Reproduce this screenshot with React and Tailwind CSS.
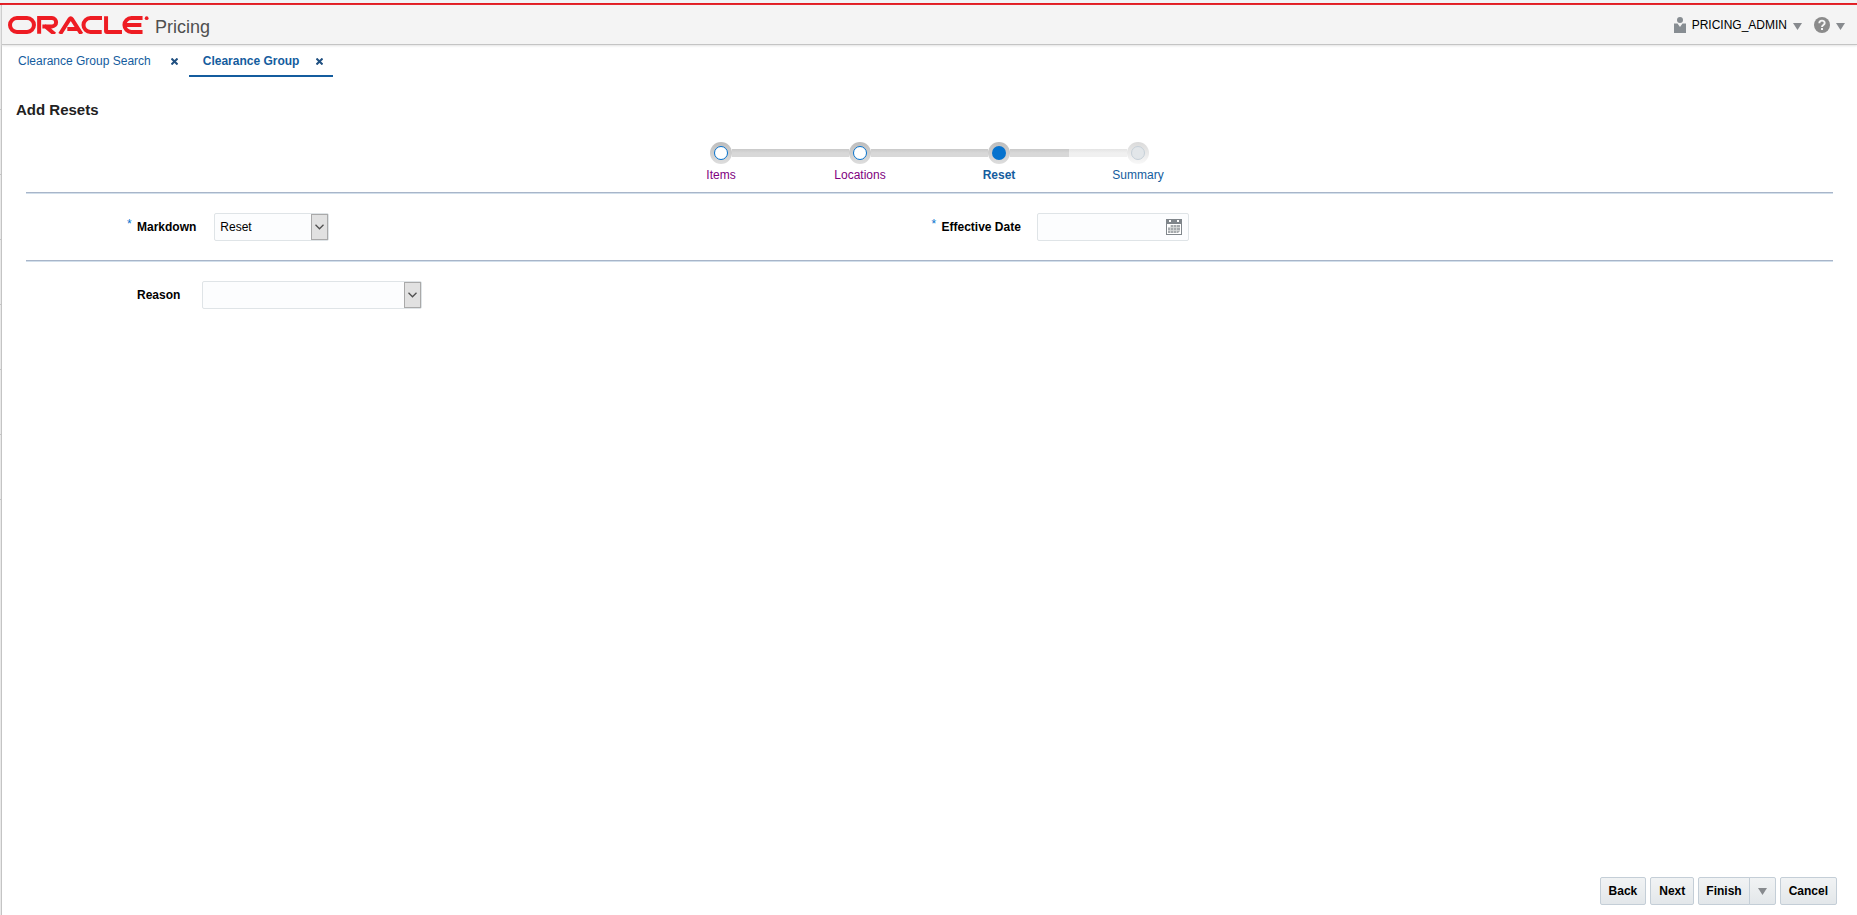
import React from "react";

function Caret({ className = "" }) {
  return (
    <svg aria-hidden="true" width="9" height="7" viewBox="0 0 9 7" className={className}>
      <path d="M0 0H9L4.5 7Z" fill="#878a8e" />
    </svg>
  );
}

function OracleLogo() {
  return (
    <svg role="img" aria-label="Oracle" width="141" height="18" viewBox="0 0 240 30.6" fill="none" stroke="#ee1c23" strokeWidth="6.8">
      <rect x="3.4" y="3.5" width="40.8" height="23.6" rx="11.8" />
      <path d="M53 30.4V3.5H74.8a7.1 7.1 0 0 1 0 14.2H58.5M62 16L79.6 31" />
      <path d="M88.6 30.6L104.8 5.2Q106.8 2.4 108.8 5.2L125 30.6M101 22.1H118" />
      <path d="M160 3.5H140.3a11.8 11.8 0 0 0 0 23.6H159.5" />
      <path d="M166.9 .2V25.4Q166.9 27.1 168.6 27.1H194" />
      <path d="M229 3.5H210a11.8 11.8 0 0 0 0 23.6H229M198 15.3H227" />
      <circle cx="236" cy="3.6" r="3.2" fill="#ee1c23" stroke="none" />
    </svg>
  );
}

function CloseButton({ label }) {
  return (
    <button type="button" aria-label={label} className="flex size-3 items-center justify-center">
      <svg width="7" height="7" viewBox="0 0 7 7" stroke="#205081" strokeWidth="2">
        <path d="M.5 .5L6.5 6.5M6.5 .5L.5 6.5" />
      </svg>
    </button>
  );
}

function Header() {
  return (
    <header className="flex h-10 items-center justify-between border-b border-[#c4c4c4] bg-[#f4f4f4] pr-3 pl-1.5 shadow-[0_1px_2px_#e4e4e4]">
      <div className="flex items-center gap-1.5">
        <OracleLogo />
        <h1 className="pt-1 text-lg leading-6 text-[#4f4f4f]">Pricing</h1>
      </div>
      <div className="flex items-center gap-3">
        <button type="button" className="flex items-center gap-1.5">
          <svg aria-hidden="true" width="12" height="16" viewBox="0 0 12 16" fill="#878d92">
            <circle cx="6" cy="3" r="3" />
            <path d="M0 6.5H3.5L6 10L8.5 6.5H12V16H0Z" />
          </svg>
          <span className="text-xs text-black">PRICING_ADMIN</span>
          <Caret className="mt-1" />
        </button>
        <button type="button" aria-label="Help" className="flex items-center gap-1.5">
          <svg aria-hidden="true" width="16" height="16" viewBox="0 0 16 16">
            <circle cx="8" cy="8" r="8" fill="#8b8b8b" />
            <path d="M5.3 6.2C5.3 2.8 10.7 2.8 10.7 6C10.7 8 8 7.9 8 10" fill="none" stroke="#f4f4f4" strokeWidth="1.9" />
            <rect x="7" y="11" width="2" height="2" fill="#f4f4f4" />
          </svg>
          <Caret className="mt-1" />
        </button>
      </div>
    </header>
  );
}

function Tabs() {
  return (
    <nav aria-label="Open tabs" className="flex h-8 items-stretch pl-4 text-xs text-[#145c9e]">
      <div className="flex items-center gap-[18px] pr-2">
        <a href="#search">Clearance Group Search</a>
        <CloseButton label="Close Clearance Group Search" />
      </div>
      <div className="flex items-center gap-3.5 border-b-2 border-[#145c9e] pt-0.5 pr-2 pl-3.5 font-bold">
        <a href="#group" aria-current="page">Clearance Group</a>
        <CloseButton label="Close Clearance Group" />
      </div>
    </nav>
  );
}

const doneBar = "h-2 flex-1 bg-linear-to-b from-[#c9c9c9] via-[#d8d8d8] to-[#d8d8d8]";
const todoBar = "h-2 flex-1 bg-linear-to-b from-[#e4e4e4] via-[#f0f0f0] to-[#f0f0f0]";
const doneRing = "flex size-[22px] items-center justify-center rounded-full bg-linear-to-b from-[#bdbdbd] to-[#dedede]";
const todoRing = "flex size-[22px] items-center justify-center rounded-full bg-linear-to-b from-[#dadada] to-[#f8f8f8]";

const steps = [
  { name: "Items", left: "flex-1", right: doneBar, ring: doneRing, dot: "border border-[#0572ce] bg-white", text: "text-[#800080]" },
  { name: "Locations", left: doneBar, right: doneBar, ring: doneRing, dot: "border border-[#0572ce] bg-white", text: "text-[#800080]" },
  { name: "Reset", left: doneBar, right: doneBar, ring: doneRing, dot: "bg-[#0572ce]", text: "font-bold text-[#145c9e]", current: true },
  { name: "Summary", left: todoBar, right: "flex-1", ring: todoRing, dot: "border border-[#c6d0d8] bg-[#e2e6e9]", text: "text-[#145c9e]" },
];

function Stepper() {
  return (
    <ol className="flex justify-center pb-2">
      {steps.map((s) => (
        <li key={s.name} className="w-[139px]">
          <a href={"#" + s.name} aria-current={s.current ? "step" : undefined} className="flex flex-col gap-0.5">
            <span className="flex items-center">
              <span className={s.left} />
              <span className={s.ring}>
                <span className={"size-3.5 rounded-full " + s.dot} />
              </span>
              <span className={s.right} />
            </span>
            <span className={"text-center text-xs leading-[18px] " + s.text}>{s.name}</span>
          </a>
        </li>
      ))}
    </ol>
  );
}

function SelectBox({ id, width, children }) {
  return (
    <div className={"relative h-7 " + width}>
      <select id={id} className="size-full appearance-none rounded-xs border border-[#dfe4e7] bg-[#fcfdfe] pr-5 pl-[5px] text-xs text-black">
        {children}
      </select>
      <span className="pointer-events-none absolute inset-y-px right-px flex w-[17px] items-center justify-center border border-[#a9a9a9] bg-[#e1e1e1]">
        <svg aria-hidden="true" width="9" height="6" viewBox="0 0 9 6" fill="none" stroke="#505050" strokeWidth="1.3">
          <path d="M.5 .8L4.5 4.8L8.5 .8" />
        </svg>
      </span>
    </div>
  );
}

function Label({ htmlFor, required, children }) {
  return (
    <label htmlFor={htmlFor} className="flex items-center text-xs font-bold text-black">
      <span className="w-2.5 self-start pb-1.5 leading-3 font-normal text-[#0572ce]">{required ? "*" : ""}</span>
      {children}
    </label>
  );
}

function CalendarIcon() {
  return (
    <svg aria-hidden="true" width="16" height="16" viewBox="0 0 16 16">
      <rect x=".5" y=".5" width="15" height="15" fill="#fff" stroke="#80868b" />
      <rect width="16" height="5" fill="#80868b" />
      <path d="M3 1H5V3H3ZM11 1H13V3H11Z" fill="#fff" />
      <path d="M5 6H14V12L12 14H2V8H5Z" fill="#a6aaad" />
      <path d="M2 8.5H14M2 11.5H14M4.5 6V14M7.5 6V14M10.5 6V14" stroke="#d8dadb" strokeWidth=".8" />
    </svg>
  );
}

function Rule() {
  return <hr className="mx-6 h-0.5 border-0 bg-linear-to-b from-[#a8b5c9] from-50% to-[#d2dfeb] to-50%" />;
}

function EdgeStrip() {
  return (
    <div aria-hidden="true" className="w-px bg-[#e9e9e9] pt-10">
      {[0, 1, 2, 3, 4, 5, 6].map((n) => (
        <div key={n} className="h-[65px] border-b border-[#c4c4c4]" />
      ))}
    </div>
  );
}

const buttonStyle = "h-7 border border-[#c4ced7] bg-linear-to-b from-[#f1f3f4] to-[#e3e7ea] text-xs font-bold text-black";

function Footer() {
  return (
    <footer className="mt-auto flex justify-end gap-1 pr-5 pb-2.5">
      <button type="button" className={buttonStyle + " rounded-xs px-2"}>Back</button>
      <button type="button" className={buttonStyle + " rounded-xs px-2"}>Next</button>
      <div className="flex">
        <button type="button" className={buttonStyle + " rounded-l-xs px-[7px]"}>Finish</button>
        <button type="button" aria-label="More finish options" className={buttonStyle + " -ml-px rounded-r-xs px-2"}>
          <Caret />
        </button>
      </div>
      <button type="button" className={buttonStyle + " rounded-xs px-2"}>Cancel</button>
    </footer>
  );
}

export default function App() {
  return (
    <div className="flex min-h-screen flex-col bg-white font-['Liberation_Sans',Arial,sans-serif]">
      <div className="h-[5px] border-b-2 border-[#e21b22] bg-[#f1f3f5]" />
      <div className="flex grow">
        <EdgeStrip />
        <div className="flex min-w-0 grow flex-col border-l border-[#c4c4c4]">
          <Header />
          <Tabs />
          <main>
            <h2 className="px-3.5 pt-6 pb-[23px] text-[15px] leading-[18px] font-bold text-[#222]">Add Resets</h2>
            <Stepper />
            <Rule />
            <div className="mx-6 grid grid-cols-2 py-[19px]">
              <div className="flex items-center gap-[18px] pl-[101px]">
                <Label htmlFor="markdown" required>Markdown</Label>
                <SelectBox id="markdown" width="w-[115px]">
                  <option>Reset</option>
                </SelectBox>
              </div>
              <div className="flex items-center gap-4 pl-0.5">
                <Label htmlFor="date" required>Effective Date</Label>
                <div className="flex h-7 w-[152px] items-center rounded-xs border border-[#dfe4e7] bg-[#fcfdfe] pr-1.5">
                  <input id="date" type="text" className="h-full min-w-0 flex-1 px-1 text-xs" />
                  <button type="button" aria-label="Select date"><CalendarIcon /></button>
                </div>
              </div>
            </div>
            <Rule />
            <div className="mx-6 flex items-center gap-[22px] py-[19px] pl-[101px]">
              <Label htmlFor="reason">Reason</Label>
              <SelectBox id="reason" width="w-[220px]">
                <option></option>
              </SelectBox>
            </div>
          </main>
          <Footer />
        </div>
      </div>
    </div>
  );
}
